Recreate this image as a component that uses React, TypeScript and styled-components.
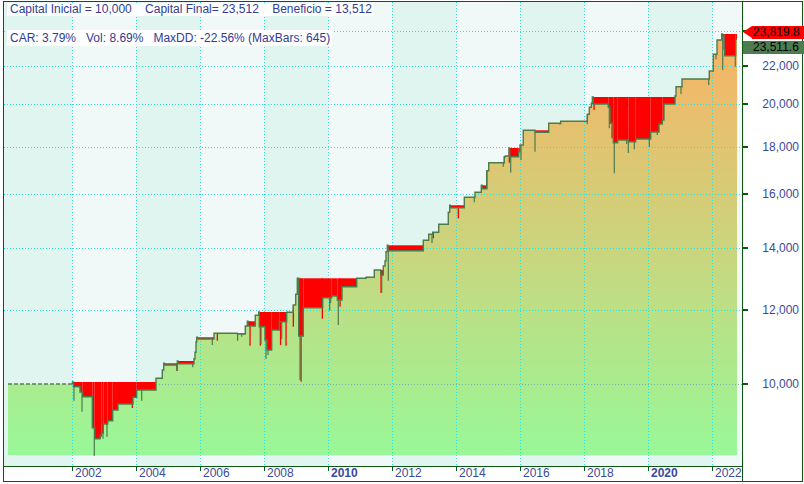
import React from "react";
import styled, { createGlobalStyle } from "styled-components";

const FRAME = "#0f570f";
const AXIS_TEXT = "#3a4aa2";
const TITLE_TEXT = "#2f3d94";

const GlobalStyle = createGlobalStyle`
  html, body { margin: 0; padding: 0; background: #ffffff; }
  body { font-family: "Liberation Sans", Arial, sans-serif; }
`;

const Page = styled.div`
  width: 804px;
  height: 484px;
  padding: 1px 0 0 3px;
  box-sizing: border-box;
  background: #ffffff;
`;

const Frame = styled.div`
  width: 800px;
  height: 481px;
  box-sizing: border-box;
  border: 1px solid ${FRAME};
  display: grid;
  grid-template-columns: 738px 1fr;
  grid-template-rows: 464px 1fr;
`;

const PlotPanel = styled.div`
  position: relative;
  grid-column: 1;
  grid-row: 1;
  overflow: hidden;
  background: #f0f8f8;
`;

const ChartSvg = styled.svg`
  display: block;
`;

const Legend = styled.div`
  position: absolute;
  left: 3px;
  top: 1px;
  display: flex;
  flex-direction: column;
  align-items: flex-start;
  gap: 14px;
`;

const LegendLine = styled.div<{ $h: number }>`
  background: #ffffff;
  color: ${TITLE_TEXT};
  font-size: 12px;
  line-height: ${(p) => p.$h}px;
  height: ${(p) => p.$h}px;
  padding: 0 2px 0 3px;
  white-space: pre;
`;

const ValueAxis = styled.div`
  position: relative;
  grid-column: 2;
  grid-row: 1 / span 2;
  border-left: 1px solid ${FRAME};
`;

const AxisTick = styled.div`
  position: absolute;
  left: 0;
  width: 5px;
  height: 2px;
  background: ${FRAME};
`;

const AxisLabel = styled.div`
  position: absolute;
  right: 3px;
  font-size: 12px;
  line-height: 14px;
  color: ${AXIS_TEXT};
  white-space: nowrap;
`;

const PriceTag = styled.div<{ $bg: string; $arrow?: boolean }>`
  position: absolute;
  left: ${(p) => (p.$arrow ? 9 : 0)}px;
  right: -2px;
  height: 13px;
  line-height: 13px;
  background: ${(p) => p.$bg};
  color: #000000;
  font-size: 12px;
  padding-left: ${(p) => (p.$arrow ? 1 : 10)}px;
  white-space: nowrap;
  &::before {
    content: "";
    display: ${(p) => (p.$arrow ? "block" : "none")};
    position: absolute;
    left: -9px;
    top: 0;
    width: 0;
    height: 0;
    border-top: 6.5px solid transparent;
    border-bottom: 6.5px solid transparent;
    border-right: 9px solid ${(p) => p.$bg};
  }
`;

const TimeAxis = styled.div`
  grid-column: 1;
  grid-row: 2;
  border-top: 1px solid ${FRAME};
  display: flex;
  padding-left: 68px;
  overflow: hidden;
  background: #ffffff;
`;

const YearCell = styled.div<{ $bold?: boolean }>`
  position: relative;
  flex: 0 0 64px;
  box-sizing: border-box;
  padding-left: 3px;
  font-size: 12px;
  line-height: 12px;
  color: ${AXIS_TEXT};
  font-weight: ${(p) => (p.$bold ? 700 : 400)};
  &::before {
    content: "";
    position: absolute;
    left: 0;
    top: 0;
    width: 1px;
    height: 4px;
    background: ${FRAME};
  }
`;

/* ---------- chart data (page pixel coordinates) ---------- */

const yOf = (v: number) => 384 - 403.3 * Math.log(v / 10000);

const END_X = 737;
const FILL_BOTTOM = 455;

const S: [number, number][] = [
  [8, 384], [72.5, 382], [73.5, 386.7], [80, 392], [82.7, 396.7], [92.3, 427.7],
  [94.7, 438.7], [100, 436], [101.3, 433], [103.3, 424], [107.7, 420.7], [112.7, 410],
  [118, 404], [133, 397.3], [136.7, 390], [156, 378.3], [162.3, 370], [163.7, 363.3],
  [164.3, 365], [177.3, 361], [178, 363.7], [194, 358.7], [195, 352.3], [196, 342],
  [196.7, 337.3], [197.3, 339], [214, 333.3], [237.3, 334], [245.3, 326], [247.3, 321.3],
  [248, 326], [255.3, 315.3], [258.7, 312], [259.3, 326.7], [265, 340], [267, 350],
  [271.7, 330], [279.3, 321.7], [286.7, 312.3], [293.3, 305], [295.7, 294.3], [297.3, 278.3],
  [298.7, 336], [303.3, 307.7], [322.7, 297.7], [331.7, 296], [337.3, 300], [342, 286.7],
  [356.7, 278.3], [366, 277.3], [374.3, 270], [380.7, 275], [383.3, 266], [385, 261],
  [386, 251.7], [387.3, 245.3], [388, 250.7], [423.3, 240.3], [428.7, 234.3], [432.7, 232.3],
  [438.7, 224.3], [448.3, 212.3], [449.7, 205.3], [450.3, 207.7], [464.3, 197.3], [475, 192.3],
  [481.3, 185.3], [482, 188.7], [486.7, 170.7], [488.7, 162.7], [504.3, 156.7], [505.3, 156],
  [509, 148], [509.7, 156.7], [518.7, 151.7], [520, 145], [523.3, 130.3], [535, 132.3],
  [548.7, 123.3], [560.7, 121.3], [587.3, 114.3], [589.3, 107.3], [591.3, 103.3], [592.3, 97],
  [593.3, 104], [608.3, 107.3], [610, 123.3], [613.3, 142.7], [617.7, 140], [628.3, 141.7],
  [635.7, 139], [650.7, 132], [659, 124], [662.3, 120], [664, 104], [675, 96],
  [676, 86.7], [682, 79], [709.3, 71], [713.3, 54.3], [717, 40], [721.7, 34],
  [722.3, 36], [724, 49], [724.7, 55.7], [735.7, 39.2],
];

const GREEN_SPIKES: [number, number][] = [
  [74, 400.7], [82, 411.7], [94.3, 456], [103, 438.7], [107, 436.7], [141.7, 400.7],
  [176.7, 370.7], [192.7, 367.3], [212.3, 345], [237.6, 340.7], [241.7, 336.7], [261, 344.3],
  [266, 359], [268, 355], [281.7, 339.3], [300, 380], [329.7, 310.7], [330.7, 303],
  [338.3, 325], [381.7, 292.7], [388.3, 280.7], [432, 243], [474.3, 202.3], [503.3, 166.7],
  [510.7, 172.7], [521, 160], [535, 151.7], [560, 124.7], [587.3, 124.3], [609.3, 128.3],
  [614.3, 173.3], [626.7, 144], [628.3, 153], [634.3, 149.3], [649.3, 146.7], [657.3, 135],
  [681, 94], [708.7, 85], [716, 59.3], [722.7, 70], [735.3, 66.7],
];

const RED_SPIKES: [number, number][] = [
  [100, 438.7], [132.3, 408], [177, 371], [217.3, 340.7], [250, 345.7], [260.3, 345.7],
  [280.5, 345], [286, 345.7], [293.3, 326.7], [301, 381.7], [322.3, 318.7], [340, 306.7],
  [381, 293], [433.3, 238.3], [458.3, 218.3], [486.7, 188.7], [504.3, 162.7], [509.3, 162.7],
  [594, 110], [612, 138.3],
];

const eqAt = (x: number) => {
  let y = S[0][1];
  for (const [sx, sy] of S) {
    if (sx <= x) y = sy;
    else break;
  }
  return y;
};

const peakAt = (x: number) => {
  let p = Infinity;
  for (const [sx, sy] of S) {
    if (sx <= x) p = Math.min(p, sy);
    else break;
  }
  return p;
};

const buildLine = (startIdx: number) => {
  let d = `M ${S[startIdx][0]} ${S[startIdx][1]}`;
  for (let i = startIdx; i < S.length; i++) {
    const nx = i + 1 < S.length ? S[i + 1][0] : END_X;
    d += ` H ${nx}`;
    if (i + 1 < S.length) d += ` V ${S[i + 1][1]}`;
  }
  return d;
};

const FILL_PATH = buildLine(0) + ` V ${FILL_BOTTOM} H ${S[0][0]} Z`;
const LINE_PATH = `M ${S[1][0]} 384 V ${S[1][1]}` + buildLine(1).replace(/^M [^H]+/, " ");

const DRAWDOWN = (() => {
  const rects: { x: number; y: number; w: number; h: number }[] = [];
  let peak = Infinity;
  for (let i = 0; i < S.length; i++) {
    const [x, y] = S[i];
    peak = Math.min(peak, y);
    const nx = i + 1 < S.length ? S[i + 1][0] : END_X;
    if (y > peak + 0.2) rects.push({ x, y: peak, w: nx - x, h: y - peak });
  }
  return rects;
})();

const DARK_BANDS = [
  [4, 72], [136, 200], [264, 328], [392, 456], [520, 584], [648, 712],
];
const V_GRID = [72, 136, 200, 264, 328, 392, 456, 520, 584, 648, 712];
const LEVELS = [10000, 12000, 14000, 16000, 18000, 20000, 22000, 24000];
const YEARS = [2002, 2004, 2006, 2008, 2010, 2012, 2014, 2016, 2018, 2020, 2022];

const PEAK_VALUE = 23819.8;
const LAST_VALUE = 23511.6;

const fmtInt = (v: number) => v.toLocaleString("en-US");
const fmtDec = (v: number) =>
  v.toLocaleString("en-US", { minimumFractionDigits: 1, maximumFractionDigits: 1 });

const PANEL_TOP = 2;

function EquityChart() {
  return (
    <ChartSvg width={738} height={464} viewBox="4 2 738 464">
      <defs>
        <linearGradient id="eqFill" gradientUnits="userSpaceOnUse" x1="0" y1="34" x2="0" y2="455">
          <stop offset="0" stopColor="#f9b264" />
          <stop offset="0.5" stopColor="#cbd47d" />
          <stop offset="1" stopColor="#98f898" />
        </linearGradient>
      </defs>
      <rect x={4} y={2} width={738} height={464} fill="#f0f8f8" />
      {DARK_BANDS.map(([a, b]) => (
        <rect key={a} x={a} y={2} width={b - a} height={464} fill="#e0f4f0" />
      ))}
      <path d={FILL_PATH} fill="url(#eqFill)" />
      {V_GRID.map((x) => (
        <line
          key={x}
          x1={x + 0.5}
          x2={x + 0.5}
          y1={2}
          y2={466}
          stroke="#2ee0d6"
          strokeWidth={1}
          strokeDasharray="1 2"
        />
      ))}
      {LEVELS.map((v) => {
        const y = Math.round(yOf(v)) + 0.5;
        return (
          <line
            key={v}
            x1={v === 10000 ? 72 : 4}
            x2={742}
            y1={y}
            y2={y}
            stroke={v === 10000 ? "#6fb4a6" : "#2ee0d6"}
            strokeWidth={1}
            strokeDasharray="1 2"
          />
        );
      })}
      {DRAWDOWN.map((r, i) => (
        <rect key={i} x={r.x} y={r.y} width={r.w} height={r.h} fill="#ff0000" />
      ))}
      {RED_SPIKES.map(([x, y]) => (
        <rect key={x} x={x - 0.6} y={peakAt(x)} width={1.3} height={y - peakAt(x)} fill="#ff0000" />
      ))}
      <line x1={8} x2={72.5} y1={384} y2={384} stroke="#5b7b63" strokeWidth={1.3} strokeDasharray="4 2" />
      <path d={LINE_PATH} fill="none" stroke="#4c7c4c" strokeWidth={1.4} />
      {GREEN_SPIKES.map(([x, y]) => (
        <line key={x} x1={x} x2={x} y1={eqAt(x)} y2={y} stroke="#4c7c4c" strokeWidth={1.2} />
      ))}
    </ChartSvg>
  );
}

export default function App() {
  const peakTop = yOf(PEAK_VALUE) - 8 - PANEL_TOP;
  return (
    <>
      <GlobalStyle />
      <Page>
        <Frame>
          <PlotPanel>
            <EquityChart />
            <Legend>
              <LegendLine $h={13}>
                {"Capital Inicial = 10,000    Capital Final= 23,512    Beneficio = 13,512"}
              </LegendLine>
              <LegendLine $h={16}>
                {"CAR: 3.79%   Vol: 8.69%   MaxDD: -22.56% (MaxBars: 645)"}
              </LegendLine>
            </Legend>
          </PlotPanel>
          <ValueAxis>
            {LEVELS.map((v) => {
              const y = yOf(v) - PANEL_TOP;
              return (
                <React.Fragment key={v}>
                  <AxisTick style={{ top: y - 1 }} />
                  <AxisLabel style={{ top: y - 7 }}>{fmtInt(v)}</AxisLabel>
                </React.Fragment>
              );
            })}
            <PriceTag $bg="#ff0000" $arrow style={{ top: peakTop }}>
              {fmtDec(PEAK_VALUE)}
            </PriceTag>
            <PriceTag $bg="#4d7d4f" style={{ top: peakTop + 14.7 }}>
              {fmtDec(LAST_VALUE)}
            </PriceTag>
          </ValueAxis>
          <TimeAxis>
            {YEARS.map((yr) => (
              <YearCell key={yr} $bold={yr === 2010 || yr === 2020}>
                {yr}
              </YearCell>
            ))}
          </TimeAxis>
        </Frame>
      </Page>
    </>
  );
}
